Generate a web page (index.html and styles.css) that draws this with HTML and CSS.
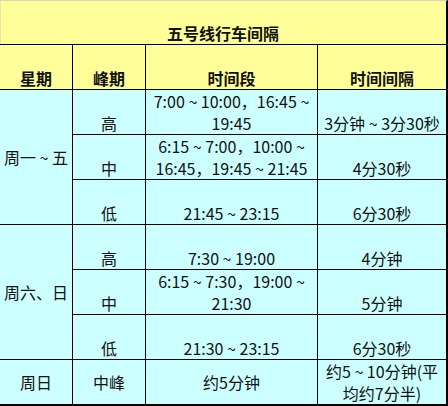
FILE: index.html
```html
<!DOCTYPE html>
<html lang="zh-CN">
<head>
<meta charset="utf-8">
<title>五号线行车间隔</title>
<link rel="stylesheet" href="styles.css">
</head>
<body>
<div class="sheet">
  <div class="cell title bold">五号线行车间隔</div>

  <div class="cell head bold">星期</div>
  <div class="cell head bold">峰期</div>
  <div class="cell head bold">时间段</div>
  <div class="cell head bold">时间间隔</div>

  <div class="cell day span3">周一 ~ 五</div>
  <div class="cell">高</div>
  <div class="cell">7:00 ~ 10:00，16:45 ~<br>19:45</div>
  <div class="cell">3分钟 ~ 3分30秒</div>

  <div class="cell">中</div>
  <div class="cell">6:15 ~ 7:00，10:00 ~<br>16:45，19:45 ~ 21:45</div>
  <div class="cell">4分30秒</div>

  <div class="cell">低</div>
  <div class="cell">21:45 ~ 23:15</div>
  <div class="cell">6分30秒</div>

  <div class="cell day span3">周六、日</div>
  <div class="cell">高</div>
  <div class="cell">7:30 ~ 19:00</div>
  <div class="cell">4分钟</div>

  <div class="cell">中</div>
  <div class="cell">6:15 ~ 7:30，19:00 ~<br>21:30</div>
  <div class="cell">5分钟</div>

  <div class="cell">低</div>
  <div class="cell">21:30 ~ 23:15</div>
  <div class="cell">6分30秒</div>

  <div class="cell mid">周日</div>
  <div class="cell mid">中峰</div>
  <div class="cell mid">约5分钟</div>
  <div class="cell mid">约5 ~ 10分钟(平<br>均约7分半)</div>
</div>
</body>
</html>
```

FILE: styles.css
```css
html, body {
  margin: 0;
  padding: 0;
  background: #ffffff;
}

.sheet {
  width: 446px;
  display: grid;
  grid-template-columns: 72px 72px 171px 128px;
  grid-template-rows: 43px 44px repeat(6, 44px) 44px;
  gap: 1px;
  background: #000000;
  border-top: 1px solid #d6d6c0;
  border-right: 2px solid #000000;
  border-bottom: 2px solid #000000;
  font-family: "Noto Sans CJK SC", "Noto Sans", sans-serif;
  font-size: 16px;
  line-height: 22px;
  color: #111111;
}

.cell {
  background: #ccffff;
  display: flex;
  align-items: flex-end;
  justify-content: center;
  text-align: center;
  white-space: nowrap;
}

.title {
  grid-column: 1 / -1;
  background: #ffff99;
  box-shadow: inset 1px 0 0 #e6e6a8;
}

.head {
  background: #ffff99;
}

.bold {
  font-weight: bold;
}

.span3 {
  grid-row: span 3;
}

.day {
  align-items: center;
}

.mid {
  align-items: center;
}
```
